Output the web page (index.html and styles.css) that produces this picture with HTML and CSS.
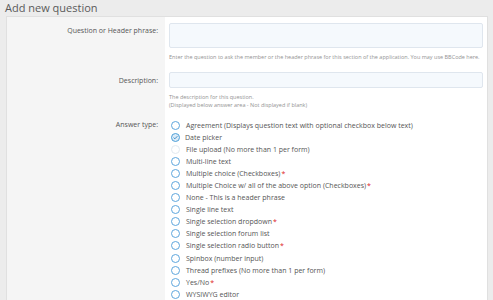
FILE: index.html
```html
<!DOCTYPE html>
<html lang="en">
<head>
    <meta charset="UTF-8">
    <title>Add new question</title>
    <link rel="stylesheet" href="styles.css">
</head>
<body>
    <h1 class="page-title">Add new question</h1>
    <div class="panel">
        <!-- Question -->
        <div class="row row-question">
            <div class="row-label">Question or Header phrase:</div>
            <div class="row-input">
                <div class="text-box tall"></div>
                <div class="hint">Enter the question to ask the member or the header phrase for this section of the application. You may use BBCode here.</div>
            </div>
        </div>

        <!-- Description -->
        <div class="row row-description">
            <div class="row-label">Description:</div>
            <div class="row-input">
                <div class="text-box"></div>
                <div class="hint">The description for this question.<br>(Displayed below answer area - Not displayed if blank)</div>
            </div>
        </div>

        <!-- Answer type -->
        <div class="row row-answer">
            <div class="row-label">Answer type:</div>
            <div class="row-input">
                <ul class="choices">
                    <li><span class="radio"></span>Agreement (Displays question text with optional checkbox below text)</li>
                    <li><svg class="radio-checked" width="9" height="9" viewBox="0 0 9 9"><circle cx="4.5" cy="4.5" r="4" fill="#dcebf7" stroke="#4d9fd8" stroke-width="1"/><path d="M2.6 4.6 L3.9 5.8 L6.4 3.2" fill="none" stroke="#3f8fcc" stroke-width="1"/></svg>Date picker</li>
                    <li><span class="radio faded"></span>File upload (No more than 1 per form)</li>
                    <li><span class="radio"></span>Multi-line text</li>
                    <li><span class="radio"></span>Multiple choice (Checkboxes)<span class="req">*</span></li>
                    <li><span class="radio"></span>Multiple Choice w/ all of the above option (Checkboxes)<span class="req">*</span></li>
                    <li><span class="radio"></span>None - This is a header phrase</li>
                    <li><span class="radio"></span>Single line text</li>
                    <li><span class="radio"></span>Single selection dropdown<span class="req">*</span></li>
                    <li><span class="radio"></span>Single selection forum list</li>
                    <li><span class="radio"></span>Single selection radio button<span class="req">*</span></li>
                    <li><span class="radio"></span>Spinbox (number input)</li>
                    <li><span class="radio"></span>Thread prefixes (No more than 1 per form)</li>
                    <li><span class="radio"></span>Yes/No<span class="req">*</span></li>
                    <li><span class="radio"></span>WYSIWYG editor</li>
                </ul>
            </div>
        </div>
    </div>
</body>
</html>
```

FILE: styles.css
```css
body {
    font-family: "Open Sans", "Noto Sans", sans-serif;
    background-color: #ececec;
    margin: 0;
    padding: 0;
    color: #555555;
    overflow: hidden;
}

.page-title {
    font-size: 11px;
    font-weight: 400;
    line-height: 15px;
    color: #5a5a5a;
    margin: 0 0 1px 5px;
}

.panel {
    margin: 0 5px 0 6px;
    background-color: #ffffff;
    border: 1px solid #e0e0e0;
    border-bottom: none;
}

.row {
    display: grid;
    grid-template-columns: 158px 1fr;
}

.row-label {
    background-color: #f5f5f5;
    text-align: right;
    font-size: 7px;
    line-height: 12px;
    padding-right: 7px;
    color: #555555;
}

.row-input {
    padding: 0 4px 0 4px;
}

.row-question .row-label {
    padding-top: 8px;
}

.row-question .row-input {
    padding-top: 6px;
    padding-bottom: 11px;
}

.row-description .row-label {
    padding-top: 3px;
}

.row-description .row-input {
    padding-top: 0;
    padding-bottom: 9px;
}

.row-answer .row-label {
    padding-top: 1px;
}

.text-box {
    height: 14px;
    background-color: #f5f9fd;
    border: 1px solid #dfe6ee;
    border-radius: 2px;
}

.text-box.tall {
    height: 23px;
}

.hint {
    font-size: 5.5px;
    line-height: 8px;
    color: #939393;
    margin-top: 5px;
}

.choices {
    list-style: none;
    margin: 0;
    padding: 1px 0 0 0;
}

.choices li {
    display: flex;
    align-items: center;
    height: 12.1px;
    font-size: 7px;
    color: #555555;
}

.radio {
    width: 7px;
    height: 7px;
    border: 1px solid #5ea6dd;
    border-radius: 50%;
    margin: 0 6px 0 2px;
    flex-shrink: 0;
}

.radio.faded {
    border-color: #e2e9f0;
}

.radio-checked {
    margin: 0 5px 0 2px;
    flex-shrink: 0;
}

.req {
    color: #d22;
    margin-left: 1px;
}
```
